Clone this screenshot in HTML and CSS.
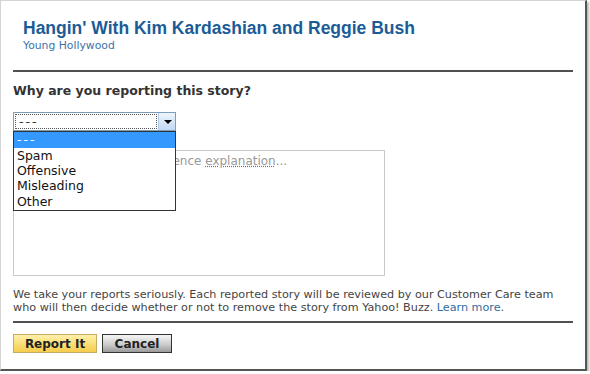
FILE: index.html
```html
<!DOCTYPE html>
<html lang="en">
  <head>
    <meta charset="UTF-8" />
    <title>Report Story</title>
    <link rel="stylesheet" href="styles.css">
  </head>
  <body>
    <div class="frame">
      <div class="story">
        <h1>Hangin' With Kim Kardashian and Reggie Bush</h1>
        <a class="source" href="#">Young Hollywood</a>
      </div>
      <hr class="rule" />
      <h2>Why are you reporting this story?</h2>
      <div class="picker">
        <div class="select">
          <span class="current">---</span>
          <span class="arrow"></span>
        </div>
        <ul class="options">
          <li class="active">---</li>
          <li>Spam</li>
          <li>Offensive</li>
          <li>Misleading</li>
          <li>Other</li>
        </ul>
      </div>
      <div class="explain">Please provide a one-sente<span>nce </span><span class="typo">explanation</span>...</div>
      <p class="note">
        We take your reports seriously. Each reported story will be reviewed by our Customer Care team<br />
        who will then decide whether or not to remove the story from Yahoo! Buzz. <a href="#">Learn more</a>.
      </p>
      <hr class="rule" />
      <div class="actions">
        <button class="report">Report It</button>
        <button class="cancel">Cancel</button>
      </div>
    </div>
  </body>
</html>
```

FILE: styles.css
```css
body {
  margin: 0;
  background: #fff;
  font-family: "DejaVu Sans", Verdana, sans-serif;
  color: #333;
}

.frame {
  width: 572px;
  height: 368px;
  padding: 0 0 0 12px;
  border-top: 1px solid #d4d4d4;
  border-left: 1px solid #d4d4d4;
  border-right: 2px solid #555;
  border-bottom: 2px solid #555;
  box-shadow: 2px 2px 2px #bbb;
  box-sizing: content-box;
}

.story {
  padding: 17px 0 0 10px;
  height: 52px;
}

.story h1 {
  font-family: "Liberation Sans", Arial, sans-serif;
  font-size: 17.5px;
  font-weight: bold;
  color: #1c5c96;
  margin: 0;
  line-height: 20px;
}

.source {
  display: block;
  font-size: 10.8px;
  color: #3d72a8;
  text-decoration: none;
  line-height: 13px;
  margin-top: 1px;
}

.rule {
  margin: 0;
  width: 560px;
  border: none;
  border-top: 2px solid #505050;
}

h2 {
  font-size: 12.5px;
  font-weight: bold;
  color: #333;
  margin: 11px 0 0 0;
  line-height: 15px;
}

.picker {
  position: relative;
  margin-top: 14px;
  width: 163px;
}

.select {
  display: flex;
  height: 17px;
  border: 1px solid #7f9db9;
  background: #fff;
  font-size: 12.5px;
}

.current {
  flex: 1;
  margin: 1px;
  padding-left: 3px;
  line-height: 13px;
  letter-spacing: 2px;
  border: 1px dotted #555;
}

.arrow {
  width: 16px;
  background: linear-gradient(#eef5fd, #c2d9f3);
  border-left: 1px solid #b0c8e6;
  position: relative;
}

.arrow::after {
  content: "";
  position: absolute;
  left: 5px;
  top: 7px;
  border-left: 4px solid transparent;
  border-right: 4px solid transparent;
  border-top: 4px solid #000;
}

.options {
  position: absolute;
  top: 19px;
  left: 0;
  width: 161px;
  margin: 0;
  padding: 0 0 1px 0;
  list-style: none;
  background: #fff;
  border: 1px solid #333;
  font-size: 12.5px;
  color: #111;
  z-index: 2;
}

.options li {
  line-height: 15.2px;
  padding-left: 3px;
}

.options li.active {
  background: #3399ff;
  color: #fff;
  line-height: 16px;
  letter-spacing: 2px;
}

.explain {
  margin-top: 19px;
  width: 364px;
  height: 118px;
  border: 1px solid #c9c9c9;
  padding: 3px;
  font-size: 12px;
  color: #999;
}

.typo {
  text-decoration: underline dotted #d44;
}

.note {
  font-size: 11.2px;
  line-height: 13px;
  color: #444;
  margin: 12px 0 0 0;
  width: 560px;
  height: 33px;
}

.note a {
  color: #2f6ea3;
  text-decoration: none;
}

.actions {
  display: flex;
  gap: 5px;
  margin-top: 11px;
}

button {
  font-family: "DejaVu Sans", Verdana, sans-serif;
  font-size: 12px;
  font-weight: bold;
  height: 19px;
  padding: 0;
  color: #222;
  cursor: pointer;
}

.report {
  width: 84px;
  border: 1px solid #c9aa62;
  background: linear-gradient(#fff0a8, #f6cd4c);
}

.cancel {
  width: 70px;
  border: 1px solid #333;
  background: linear-gradient(#f6f6f6, #c8c8c8 60%, #9a9a9a);
}
```
